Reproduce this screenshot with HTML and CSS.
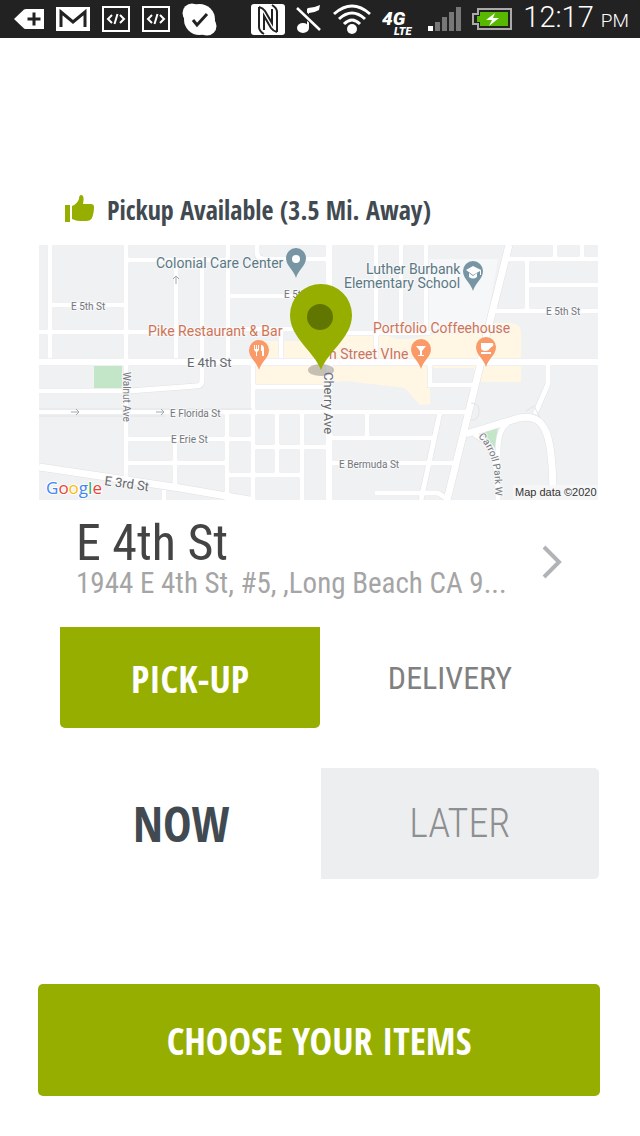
FILE: index.html
```html
<!DOCTYPE html>
<html lang="en">
<head>
    <meta charset="UTF-8">
    <meta name="viewport" content="width=device-width, initial-scale=1">
    <title>Pickup location</title>
    <link rel="stylesheet" href="styles.css">
</head>
<body>

<header class="statusBar">
    <div class="statusGroup statusLeft">
        <svg width="30" height="22" viewBox="0 0 30 22"><path fill="#fff" d="M0 11 10 1.5Q11 1 12 1H30V21H12Q11 21 10 20.500Z"/><path stroke="#222" stroke-width="3" d="M20 4.500v13M13.500 11h13"/></svg>
        <svg width="34" height="24" viewBox="0 0 34 24"><rect width="34" height="24" fill="#fff"/><path fill="none" stroke="#222" stroke-width="3" d="M5 20V5l12 10L29 5v15"/></svg>
        <svg class="codeIcon" width="28" height="26" viewBox="0 0 28 26"><rect x="1" y="1" width="26" height="24"/><path d="m10 9-4 4 4 4M18 9l4 4-4 4M15.500 8l-3 10"/></svg>
        <svg class="codeIcon" width="28" height="26" viewBox="0 0 28 26"><rect x="1" y="1" width="26" height="24"/><path d="m10 9-4 4 4 4M18 9l4 4-4 4M15.500 8l-3 10"/></svg>
        <svg width="35" height="33" viewBox="0 0 35 33"><g fill="#fff"><circle cx="17.500" cy="16.500" r="15.500"/><circle cx="10" cy="10" r="9.500"/><circle cx="25" cy="23" r="9.500"/></g><path fill="none" stroke="#222" stroke-width="3" d="m11 17 4 5 10-11"/></svg>
    </div>
    <div class="statusGroup">
        <svg width="34" height="31" viewBox="0 0 34 31"><rect width="34" height="31" rx="3" fill="#fff"/><path fill="none" stroke="#222" stroke-width="2" d="M8 3v20q0 4 5 7M8 3q4 1 6 4l7 12V5M26 28V8q0-4-5-7M26 28q-4-1-6-4l-7-12v14"/></svg>
        <svg width="26" height="30" viewBox="0 0 26 30"><path fill="#fff" d="M11 24V5l1-1q6 0 12-3l-1 5q-5 3-10 3v15z"/><ellipse cx="7" cy="24" rx="6" ry="5" fill="#fff"/><path stroke="#222" stroke-width="6" d="m2 4 23 22"/><path stroke="#fff" stroke-width="2.500" d="m1 4 23 22"/></svg>
        <svg width="38" height="30" viewBox="0 0 38 30"><g fill="none" stroke="#fff" stroke-width="3"><path d="M1 10Q19-6 37 10M6 15q13-12 26 0M11 20q8-8 16 0"/></g><circle cx="19" cy="25" r="5" fill="#fff"/></svg>
        <svg class="lteIcon" width="35" height="38" viewBox="0 0 35 38"><text x="0" y="25" font-size="19">4G</text><text x="12" y="35" font-size="11">LTE</text></svg>
        <svg width="33" height="24" viewBox="0 0 33 24"><path fill="#fff" d="M0 19h5v5H0z"/><path fill="#777" d="M7 15h5v9H7zM14 10h5v14h-5zM21 5h5v19h-5zM28 0h5v24h-5z"/></svg>
        <svg width="40" height="22" viewBox="0 0 40 22"><path fill="#222" stroke="#aaa" stroke-width="2" d="M6 1h33v20H6v-5H1V6h5z"/><path fill="#58b800" d="M8 4h28v14H8v-4H5V8h3z"/><path fill="#fff" d="m23 5-9 7h6l-3 6 10-8h-6z"/></svg>
        <div class="clock">12:17 <small>PM</small></div>
    </div>
</header>

<main>
    <h1 class="notice">
        <svg width="29" height="27" viewBox="0 0 29 27" fill="#96ae00"><path d="M0 10h5v17H0zM7 11c3-1 6-4 7-7 0-3 1-4 2-4 3 0 3 4 2 9h8q3 0 3 3c0 5-1 8-2 11-1 2-3 3-6 3h-6c-3 0-5-1-8-2z"/></svg>
        Pickup Available (3.5 Mi. Away)
    </h1>

    <svg class="map" viewBox="39 245 559 255" role="img" aria-label="Map of E 4th St">
        <defs>
            <path id="pin" d="M0 17C-2 9-10 5-10-3a10 10 0 0 1 20 0C10 5 2 9 0 17z"/>
            <path id="carroll" d="M478 437Q497 454 495 498"/>
            <g id="roads">
                <path d="M50 245V358M126 245V482M176 262V358M202 262V380Q202 386 196 386L129 391H39M228 245V358M281 329V358"/>
                <path d="M126 260H228M50 305H126M39 332H228M228 296H320M228 329H320M257 245V252Q257 259 264 259H329"/>
                <path d="M376 245V358M401 245V333M426 245V333M329 333H430M505 259H598M555 245V259M582 245V259M527 259V311M527 285H598M495 311H598"/>
                <path d="M39 412H471M253 387H329M253 362V500M126 439H253M126 463H227M227 412V500M175 439V490M277 412V475M302 412V500M253 447H329M227 475H302M164 490V500"/>
                <path d="M329 438H435M329 463H453M440 412 421 500M375 493H438L447 499M430 364V385H474M367 412V438M548 362V384L535 414M474 434 485 441Q498 455 498 500M498 500V450Q498 429 508 423"/>
            </g>
            <g id="mainRoads">
                <path d="M39 362H598M329 245V500M509 245 487 333 480 366 447 500"/>
                <path d="M39 467 180 488 255 501M466 434 519 418C548 412 553 440 553 500"/>
            </g>
        </defs>
        <path fill="#f0f1f3" d="M39 245h559v255H39z"/>
        <path fill="#f6f7f8" d="M428 259h70l-13 74h-57z"/>
        <path fill="#fff6e3" d="M255 341h66v-8h60l15 6h15l80-16h20q10 0 10 10v49h-47v-14h-44v36l-10 1-15-17-60-7-35 4h-55z"/>
        <path fill="#c3e6c8" d="M94 366h28v22H94zM480 431l18-5-3 22z"/>
        <use class="roadEdge" href="#roads"/>
        <use class="mainEdge" href="#mainRoads"/>
        <use class="road" href="#roads"/>
        <use class="mainRoad" href="#mainRoads"/>
        <path class="thinEdge" d="M39 409H252M39 416H165M471 403q9 0 8 9t-8 8M526 411l8-5 6 12"/>
        <path class="arrow" d="M71 412h8m-3-3 3 3-3 3M156 412h8m-3-3 3 3-3 3M176 284v-8m-3 3 3-3 3 3"/>

        <g class="streetName">
            <text x="71" y="310">E 5th St</text>
            <text x="284" y="298">E 5th St</text>
            <text x="546" y="315">E 5th St</text>
            <text x="170" y="417">E Florida St</text>
            <text x="171" y="443">E Erie St</text>
            <text x="339" y="468">E Bermuda St</text>
            <text transform="translate(123 372) rotate(90)">Walnut Ave</text>
            <text><textPath href="#carroll">Carroll Park W</textPath></text>
        </g>
        <g class="streetName streetNameBig">
            <text x="187" y="367">E 4th St</text>
            <text transform="translate(324 372) rotate(90)">Cherry Ave</text>
            <text transform="translate(104 485) rotate(8)">E 3rd St</text>
        </g>
        <g class="place">
            <text x="156" y="268">Colonial Care Center</text>
            <text x="366" y="274">Luther Burbank</text>
            <text x="344" y="288">Elementary School</text>
        </g>
        <g class="place food">
            <text x="148" y="336">Pike Restaurant &amp; Bar</text>
            <text x="373" y="333">Portfolio Coffeehouse</text>
            <text x="329" y="359">h Street VIne</text>
        </g>

        <use href="#pin" x="296" y="261" fill="#7895a4"/>
        <circle cx="296" cy="259" r="4" fill="#fff"/>
        <use href="#pin" x="473" y="274" fill="#7895a4"/>
        <path fill="#fff" d="m466 270 7-4 8 4v5h-1v-4l-7 4zM469 273l4 3 4-3v4q-4 3-8 0z"/>
        <g fill="#fa9a69">
            <use href="#pin" x="259" y="353"/>
            <use href="#pin" x="421" y="352"/>
            <use href="#pin" x="486" y="350"/>
        </g>
        <path fill="#fff" d="M254 345h1v4h1v-4h1v4h1v-4h1v5l-2 2v4h-1v-4l-2-2zM261 345q3 0 3 4v7h-2v-5h-1zM416 346h10l-4 5v4h2v1h-6v-1h2v-4zM481 343h11q2 0 1 3l-3 2q-1 3-5 3-4 0-4-4zM481 352h10v2h-10z"/>

        <ellipse cx="321" cy="370" rx="13" ry="6" fill="#807d78" fill-opacity=".45"/>
        <path fill="#96ae00" d="M321 370C314 351 290 338 290 315a31 31 0 0 1 62 0C352 338 328 351 321 370z"/>
        <circle cx="320" cy="317" r="13" fill="#617600"/>

        <text class="mapLogo" x="46" y="494"><tspan fill="#4285f4">G</tspan><tspan fill="#ea4335">o</tspan><tspan fill="#fbbc05">o</tspan><tspan fill="#4285f4">g</tspan><tspan fill="#34a853">l</tspan><tspan fill="#ea4335">e</tspan></text>
        <path fill="#f7f7f8" fill-opacity=".8" d="M513 485h85v15h-85z"/>
        <text class="mapData" x="515" y="496">Map data ©2020</text>
    </svg>

    <a class="location" href="#">
        <span class="locationText">
            <strong>E 4th St</strong>
            <span class="address">1944 E 4th St, #5, ,Long Beach CA 9...</span>
        </span>
        <svg width="20" height="34" viewBox="0 0 20 34"><path fill="none" stroke="#b1b3b6" stroke-width="4" d="m2 2 15 15L2 32"/></svg>
    </a>

    <div class="choice method">
        <button class="selected" type="button" aria-pressed="true">PICK-UP</button>
        <button type="button" aria-pressed="false">DELIVERY</button>
    </div>

    <div class="choice time">
        <button class="selected" type="button" aria-pressed="true">NOW</button>
        <button type="button" aria-pressed="false">LATER</button>
    </div>

    <button class="chooseItems" type="button">CHOOSE YOUR ITEMS</button>
</main>

</body>
</html>
```

FILE: styles.css
```css
* {
    box-sizing: border-box;
}
body {
    margin: 0;
    background-color: #fff;
    color: #414a51;
    font-family: "Roboto Condensed", "Liberation Sans Narrow", "Open Sans", sans-serif;
}
button {
    border: 0;
    padding: 0;
    background: none;
    font-family: inherit;
    cursor: pointer;
}
.notice, .selected, .chooseItems {
    font-family: "Open Sans Condensed", "Roboto Condensed", sans-serif;
    font-weight: 700;
}

/* status bar */
.statusBar {
    display: flex;
    justify-content: space-between;
    height: 38px;
    padding: 0 11px 0 14px;
    background-color: #222;
    color: #fff;
}
.statusGroup {
    display: flex;
    align-items: center;
    gap: 11px;
}
.statusLeft {
    gap: 12px;
}
.codeIcon {
    fill: none;
    stroke: #fff;
    stroke-width: 2;
}
.lteIcon {
    fill: #fff;
    font-family: Roboto, sans-serif;
    font-weight: 900;
    font-style: italic;
}
.clock {
    font: 300 29px/40px Roboto, sans-serif;
    white-space: nowrap;
}
.clock small {
    font-size: 19px;
}

main {
    display: flex;
    flex-direction: column;
    padding: 152px 40px 40px 38px;
}
.notice {
    display: flex;
    align-items: center;
    gap: 13px;
    margin: 0 0 15px;
    padding-left: 27px;
    font-size: 26px;
    line-height: 40px;
}
.notice svg {
    margin-bottom: 4px;
}

/* map */
.map {
    display: block;
    margin: 0 2px 0 1px;
}
.road, .mainRoad, .roadEdge, .mainEdge, .thinEdge, .arrow {
    fill: none;
    stroke: #fff;
    stroke-width: 5;
}
.mainRoad {
    stroke-width: 7;
}
.roadEdge {
    stroke: #dfe1e4;
    stroke-width: 6;
}
.mainEdge {
    stroke: #dfe1e4;
    stroke-width: 8;
}
.thinEdge {
    stroke: #e2e4e6;
    stroke-width: 1;
}
.arrow {
    stroke: #a5a7aa;
    stroke-width: 1;
}
.streetName, .place {
    font-family: Roboto, sans-serif;
    font-size: 10px;
    fill: #73777b;
    stroke: #f8f8f9;
    stroke-width: 2px;
    paint-order: stroke;
}
.streetNameBig {
    font-size: 13px;
    fill: #66696d;
}
.place {
    font-size: 14px;
    fill: #5b7885;
}
.food {
    fill: #cf7453;
}
.mapLogo {
    font: 500 17px "Open Sans", sans-serif;
    stroke: #fff;
    stroke-width: 2px;
    paint-order: stroke;
}
.mapData {
    font: 11px "Liberation Sans", sans-serif;
    fill: #333;
}

/* chosen restaurant */
.location {
    display: flex;
    align-items: center;
    justify-content: space-between;
    height: 127px;
    padding: 0 38px 4px;
    color: #444;
    text-decoration: none;
}
.locationText {
    min-width: 0;
    padding-bottom: 6px;
}
.location strong {
    display: block;
    font-size: 50px;
    line-height: 48px;
    font-weight: 400;
}
.address {
    display: block;
    color: #a5a5a5;
    font-size: 29px;
    line-height: 32px;
    white-space: nowrap;
}

.choice {
    display: grid;
    grid-template-columns: 1fr 1fr;
}
.method {
    height: 101px;
    margin: 0 20px 40px 22px;
}
.method button {
    color: #808080;
    font-size: 32px;
}
.method .selected {
    border-radius: 0 0 5px 5px;
    background-color: #96ae00;
    color: #fff;
    font-size: 38px;
}
.time {
    height: 111px;
    margin: 0 1px 105px 4px;
}
.time button {
    border-radius: 0 5px 5px 0;
    background-color: #edeef0;
    color: #8d8f91;
    font-size: 40px;
    font-weight: 300;
}
.time .selected {
    background: none;
    color: #414a51;
    font-size: 48px;
    font-weight: 700;
}
.chooseItems {
    height: 112px;
    border-radius: 5px;
    background-color: #96ae00;
    color: #fff;
    font-size: 38px;
}
```
